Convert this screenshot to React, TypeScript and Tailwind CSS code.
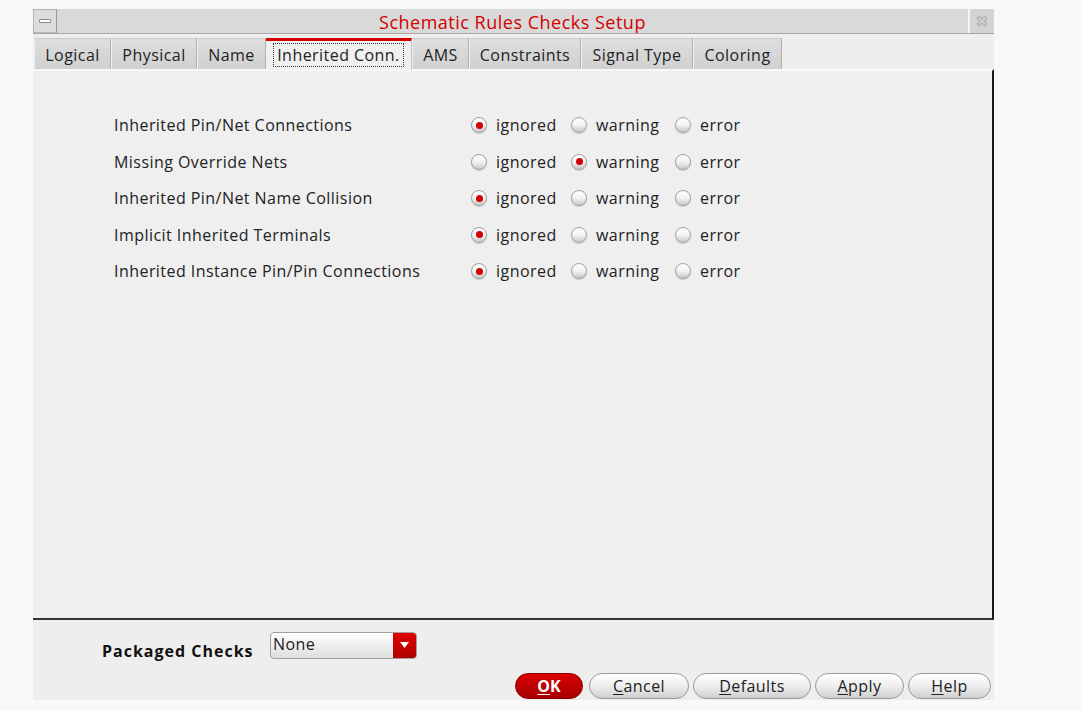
const tabs = [
  { label: "Logical", w: "w-[77px]" },
  { label: "Physical", w: "w-[86px]" },
  { label: "Name", w: "w-[69px]" },
  { label: "Inherited Conn.", w: "w-[146px]", active: true },
  { label: "AMS", w: "w-[57px]" },
  { label: "Constraints", w: "w-[112px]" },
  { label: "Signal Type", w: "w-[112px]" },
  { label: "Coloring", w: "w-[89px]" },
];

const rules = [
  { label: "Inherited Pin/Net Connections", value: 0 },
  { label: "Missing Override Nets", value: 1 },
  { label: "Inherited Pin/Net Name Collision", value: 0 },
  { label: "Implicit Inherited Terminals", value: 0 },
  { label: "Inherited Instance Pin/Pin Connections", value: 0 },
];

const options = [
  { label: "ignored", w: "w-[100px]" },
  { label: "warning", w: "w-[104px]" },
  { label: "error", w: "w-[80px]" },
];

function Radio({ on }: { on: boolean }) {
  return (
    <span className="w-[16px] h-[16px] rounded-full border border-[#a0a0a0] bg-gradient-to-b from-white via-[#f2f2f2] to-[#c8c8c8] flex items-center justify-center shadow-[0_1px_1px_rgba(0,0,0,0.15)]">
      {on && <span className="w-[7px] h-[7px] rounded-full bg-[#d40000]" />}
    </span>
  );
}

function Btn({ children, w }: { children: React.ReactNode; w: string }) {
  return (
    <button className={`${w} h-[26px] rounded-full border border-[#9a9a9a] bg-gradient-to-b from-white via-[#eeeeee] to-[#cfcfcf] text-[16px] tracking-[0.45px] text-[#222] flex items-center justify-center`}>
      {children}
    </button>
  );
}

export default function App() {
  return (
    <div className="w-[1081px] h-[710px] bg-[#f8f8f8] pt-[9px] pl-[33px]" style={{ fontFamily: '"Open Sans", "Noto Sans", sans-serif' }}>
      <div className="w-[961px] h-[691px] bg-[#eeeeee] flex flex-col">
        {/* title bar */}
        <div className="h-[25px] flex bg-[#d9d9d9] border-b border-[#a6a6a6]">
          <div className="w-[24px] border border-[#b5b5b5] border-r-[#9c9c9c] flex items-center justify-center bg-[#dcdcdc]">
            <span className="w-[12px] h-[4px] border border-[#888] bg-white rounded-[1px]" />
          </div>
          <div className="flex-1 flex items-center justify-center text-[18px] tracking-[0.5px] text-[#d30000] leading-none pt-[1px]">
            Schematic Rules Checks Setup
          </div>
          <div className="w-[26px] border-l-2 border-[#f4f4f4] bg-[#d4d4d4] flex items-center justify-center">
            <svg width="14" height="14" viewBox="0 0 14 14" fill="none" stroke="#b0b0b0" strokeWidth="1.2">
              <path d="M2 4 L4 2 L7 5 L10 2 L12 4 L9 7 L12 10 L10 12 L7 9 L4 12 L2 10 L5 7 Z" />
            </svg>
          </div>
        </div>
        {/* tabs */}
        <div className="flex h-[35px] pt-[4px] pl-[1px]">
          {tabs.map((t) =>
            t.active ? (
              <div key={t.label} className={`${t.w} h-[32px] bg-[#f0f0f0] border-t-[3px] border-[#d20000] border-r border-r-[#bdbdbd] flex items-center justify-center px-[3px] pb-[2px] -mb-[1px] relative z-10`}>
                <span className="border border-dotted border-[#333] px-[3px] text-[16px] tracking-[0.45px] text-[#222] leading-[22px]">{t.label}</span>
              </div>
            ) : (
              <div key={t.label} className={`${t.w} h-[31px] bg-gradient-to-b from-[#dedede] to-[#d0d0d0] border-t border-l border-r border-t-[#c9c9c9] border-l-[#f2f2f2] border-r-[#b0b0b0] flex items-center justify-center text-[16px] tracking-[0.45px] text-[#222] pt-[2px]`}>
                {t.label}
              </div>
            )
          )}
        </div>
        {/* content */}
        <div className="h-[551px] bg-[#efefef] border-t-2 border-t-[#f8f8f8] border-r-2 border-r-[#1a1a1a] border-b-2 border-b-[#333] pt-[36px] pl-[81px]">
          <div className="flex flex-col">
            {rules.map((r) => (
              <div key={r.label} className="flex items-center h-[36.5px]">
                <div className="w-[357px] text-[16px] tracking-[0.45px] text-[#222]">{r.label}</div>
                {options.map((o, i) => (
                  <div key={o.label} className={`${o.w} flex items-center`}>
                    <Radio on={r.value === i} />
                    <span className="ml-[9px] text-[16px] tracking-[0.45px] text-[#222]">{o.label}</span>
                  </div>
                ))}
              </div>
            ))}
          </div>
        </div>
        {/* packaged checks */}
        <div className="flex items-center h-[48px] pl-[69px] pt-[2px]">
          <span className="text-[16px] font-bold text-[#111] tracking-[1px] w-[168px] pt-[12px]">Packaged Checks</span>
          <div className="w-[147px] h-[27px] rounded-[4px] border border-[#a0a0a0] bg-gradient-to-b from-white to-[#dedede] flex overflow-hidden">
            <span className="flex-1 text-[16px] tracking-[0.45px] text-[#222] pl-[2px] leading-[22px]">None</span>
            <span className="w-[23px] bg-gradient-to-b from-[#e00000] to-[#b00000] flex items-center justify-center">
              <svg width="9" height="6" viewBox="0 0 9 6"><path d="M0 0 H9 L4.5 6 Z" fill="white" /></svg>
            </span>
          </div>
        </div>
        {/* buttons */}
        <div className="flex justify-end gap-[4px] pr-[3px] pt-[5px]">
          <button className="w-[68px] h-[26px] rounded-full bg-gradient-to-b from-[#d80000] to-[#a80000] border border-[#8a0000] text-white text-[16px] font-bold flex items-center justify-center mr-[2px]">
            <span className="underline underline-offset-2">O</span>K
          </button>
          <Btn w="w-[100px]"><span className="underline underline-offset-2">C</span>ancel</Btn>
          <Btn w="w-[118px]"><span className="underline underline-offset-2">D</span>efaults</Btn>
          <Btn w="w-[89px]"><span className="underline underline-offset-2">A</span>pply</Btn>
          <Btn w="w-[83px]"><span className="underline underline-offset-2">H</span>elp</Btn>
        </div>
      </div>
    </div>
  );
}
